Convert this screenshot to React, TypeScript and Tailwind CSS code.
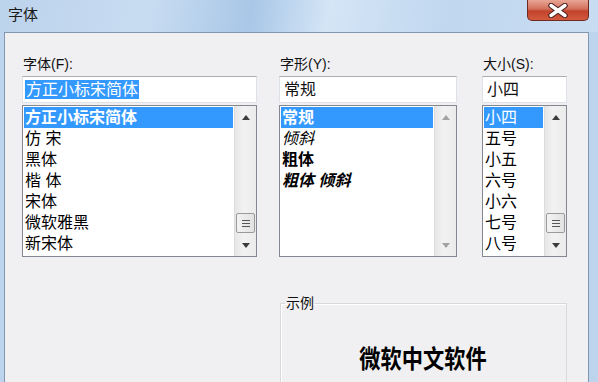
import React from "react";

const ui = "font-['Liberation_Sans','Noto_Sans_CJK_SC',sans-serif]";

function Arrow({ down, disabled }: { down?: boolean; disabled?: boolean }) {
  return (
    <div className="flex h-[22px] items-center justify-center">
      <svg width="8" height="5" viewBox="0 0 8 5">
        <path
          d={down ? "M0 0 L8 0 L4 5 Z" : "M0 5 L4 0 L8 5 Z"}
          fill={disabled ? "#a3a3a3" : "#3c3c3c"}
        />
      </svg>
    </div>
  );
}

function ScrollBar({ thumb, disabled }: { thumb?: boolean; disabled?: boolean }) {
  return (
    <div className="flex w-[22px] flex-col border-l border-[#dcdcdc] bg-[linear-gradient(90deg,#e6e6e6,#f2f2f2_40%,#ebebeb)]">
      <Arrow disabled={disabled} />
      <div className="flex flex-1 flex-col justify-end px-[1px] pb-[1px]">
        {thumb && (
          <div className="flex h-[20px] flex-col items-center justify-center gap-[2px] rounded-[2px] border border-[#9a9a9a] bg-[linear-gradient(90deg,#f3f3f3,#e2e2e2)]">
            <div className="h-[1px] w-[8px] bg-[#555]" />
            <div className="h-[1px] w-[8px] bg-[#555]" />
            <div className="h-[1px] w-[8px] bg-[#555]" />
          </div>
        )}
      </div>
      <Arrow down disabled={disabled} />
    </div>
  );
}

type Item = { text: string; cls?: string };

function Column({
  label,
  value,
  selectValue,
  items,
  width,
  thumb,
  disabled,
}: {
  label: string;
  value: string;
  selectValue?: boolean;
  items: Item[];
  width: string;
  thumb?: boolean;
  disabled?: boolean;
}) {
  return (
    <div className={`flex flex-col ${width}`}>
      <div className="mb-[3px] pl-[1px] text-[14px] leading-[18px] text-[#111]">{label}</div>
      <div className="flex h-[27px] items-center border border-[#dde2e8] border-t-[#abadb3] bg-white pl-[2px] text-[16px] leading-[19px]">
        <span className={selectValue ? "bg-[#3399ff] px-[1px] text-white" : "px-[2px] text-[#111]"}>
          {value}
        </span>
      </div>
      <div className="mt-[2px] flex h-[152px] border border-[#828790] bg-white">
        <div className="flex-1 p-[1px]">
          {items.map((it, i) => (
            <div
              key={it.text}
              className={`h-[21px] pl-[1px] text-[16px] leading-[21px] whitespace-nowrap ${
                i === 0 ? "bg-[#3399ff] text-white" : "text-black"
              } ${it.cls ?? ""}`}
            >
              {it.text}
            </div>
          ))}
        </div>
        <ScrollBar thumb={thumb} disabled={disabled} />
      </div>
    </div>
  );
}

export default function App() {
  return (
    <div className={`flex h-[382px] w-[598px] flex-col overflow-hidden bg-[#bcd4ee] ${ui}`}>
      <div className="flex h-[32px] shrink-0 bg-[linear-gradient(100deg,#bcd3ec_0%,#c8dcf1_25%,#a9c7e7_42%,#d4e5f6_55%,#c0d7ef_75%,#c9ddf2_100%)]">
        <div className="pl-[8px] pt-[6px] text-[15px] leading-[18px] text-[#1a1a1a]">字体</div>
        <div className="ml-auto mr-[9px] flex h-[21px] w-[62px] items-center justify-center rounded-b-[5px] border border-t-0 border-[#6b2a22] bg-[linear-gradient(180deg,#e9a696_0%,#d2705c_45%,#c2432b_55%,#d35a3d_100%)]">
          <svg width="22" height="15" viewBox="0 0 22 15">
            <path d="M4 2.5 L18 12.5 M18 2.5 L4 12.5" stroke="#4a2020" strokeWidth="5.5" strokeLinecap="round" />
            <path d="M4 2.5 L18 12.5 M18 2.5 L4 12.5" stroke="#ffffff" strokeWidth="3.4" strokeLinecap="round" />
          </svg>
        </div>
      </div>
      <div className="flex flex-1 pl-[4px] pr-[9px]">
        <div className="flex flex-1 flex-col border border-b-0 border-[#8497b0] bg-[#f0eff1] pl-[17px] pt-[22px]">
          <div className="flex">
            <Column
              label="字体(F):"
              value="方正小标宋简体"
              selectValue
              width="w-[235px]"
              thumb
              items={[
                { text: "方正小标宋简体", cls: "font-semibold" },
                { text: "仿 宋" },
                { text: "黑体" },
                { text: "楷 体" },
                { text: "宋体" },
                { text: "微软雅黑" },
                { text: "新宋体" },
              ]}
            />
            <div className="w-[22px]" />
            <Column
              label="字形(Y):"
              value="常规"
              width="w-[178px]"
              disabled
              items={[
                { text: "常规", cls: "font-bold" },
                { text: "倾斜", cls: "italic" },
                { text: "粗体", cls: "font-bold" },
                { text: "粗体 倾斜", cls: "font-bold italic" },
              ]}
            />
            <div className="w-[25px]" />
            <Column
              label="大小(S):"
              value="小四"
              width="w-[85px]"
              thumb
              items={[
                { text: "小四" },
                { text: "五号" },
                { text: "小五" },
                { text: "六号" },
                { text: "小六" },
                { text: "七号" },
                { text: "八号" },
              ]}
            />
          </div>
          <fieldset className="ml-[258px] mt-[37px] h-[110px] w-[287px] border border-[#d9d9dc] shadow-[inset_1px_1px_0_#ffffff]">
            <legend className="ml-[4px] px-[1px] text-[14px] leading-[18px] text-[#111]">示例</legend>
            <div className="flex justify-center pt-[32px]">
              <span className="inline-block scale-x-[0.85] text-[25px] font-semibold leading-[30px] text-black">
                微软中文软件
              </span>
            </div>
          </fieldset>
        </div>
      </div>
    </div>
  );
}
